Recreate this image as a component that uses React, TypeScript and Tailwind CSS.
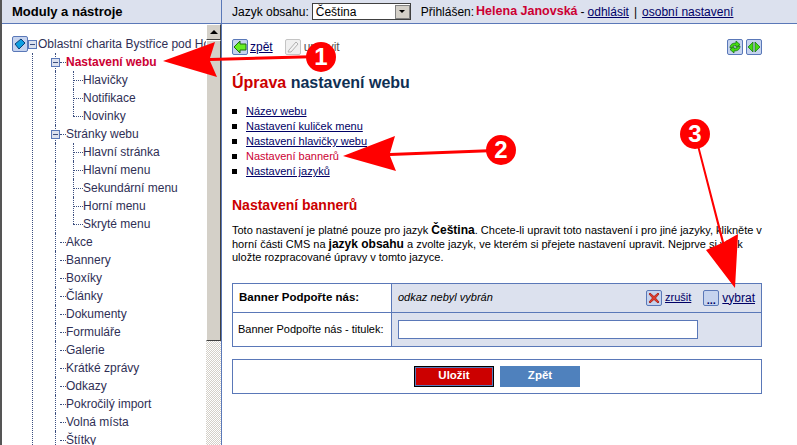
const treeTop = [
  { label: "Hlavičky" },
  { label: "Notifikace" },
  { label: "Novinky" },
]
const treePages = ["Hlavní stránka", "Hlavní menu", "Sekundární menu", "Horní menu", "Skryté menu"]
const treeRest = ["Akce", "Bannery", "Boxíky", "Články", "Dokumenty", "Formuláře", "Galerie", "Krátké zprávy", "Odkazy", "Pokročilý import", "Volná místa", "Štítky"]
const links = ["Název webu", "Nastavení kuliček menu", "Nastavení hlavičky webu", "Nastavení bannerů", "Nastavení jazyků"]

function Minus() {
  return (
    <span className="relative z-10 flex h-[9px] w-[9px] shrink-0 items-center justify-center border border-[#5a78b8] bg-[#dce1ee]">
      <span className="h-px w-[5px] bg-[#3c4f80]" />
    </span>
  )
}

function Level1({ label, open, active, last }: { label: string; open?: boolean; active?: boolean; last?: boolean }) {
  return (
    <div className="relative flex h-[18px] items-center pl-[49px]">
      <span className={`absolute left-[53px] top-0 border-l border-dotted border-[#3c4f80] ${last ? "h-[9px]" : "h-[18px]"}`} />
      {open ? <Minus /> : <span className="w-[9px] shrink-0" />}
      <span className="h-0 w-[6px] border-t border-dotted border-[#3c4f80]" />
      <span className={`whitespace-nowrap ${active ? "font-bold text-[#cc0033]" : "text-[#2f2f55]"}`}>{label}</span>
    </div>
  )
}

function Level2({ label, last }: { label: string; last?: boolean }) {
  return (
    <div className="relative flex h-[18px] items-center pl-[71px]">
      <span className="absolute left-[53px] top-0 h-[18px] border-l border-dotted border-[#3c4f80]" />
      <span className={`absolute left-[71px] top-0 border-l border-dotted border-[#3c4f80] ${last ? "h-[9px]" : "h-[18px]"}`} />
      <span className="h-0 w-[10px] border-t border-dotted border-[#3c4f80]" />
      <span className="whitespace-nowrap text-[#2f2f55]">{label}</span>
    </div>
  )
}

function IconBox({ children, plain }: { children: React.ReactNode; plain?: boolean }) {
  return (
    <span className={`flex h-[16px] w-[16px] shrink-0 items-center justify-center rounded-[2px] border ${plain ? "border-[#c4c4c4] bg-[#f0f0f0]" : "border-[#5a78b8] bg-[#c5d3ee]"}`}>
      <svg width="14" height="14" viewBox="0 0 14 14">{children}</svg>
    </span>
  )
}

function Overlay() {
  return (
    <svg className="pointer-events-none absolute left-0 top-0 z-20" width="797" height="445" viewBox="0 0 797 445">
      <g fill="#ff0000">
        <polygon points="163,61 215,42 210,58 320,55 320,58 210,61 217,77" />
        <polygon points="343,156 395,136 390,153 495,149 495,152 390,156 396,171" />
        <polygon points="735,288 706,250 722,243 694,134 696,134 724,242 738,234" />
      </g>
      <circle cx="321" cy="57" r="15" fill="#ff0000" />
      <circle cx="501" cy="150" r="15" fill="#ff0000" />
      <circle cx="695" cy="134" r="15" fill="#ff0000" />
    </svg>
  )
}

function Badge({ n, cls }: { n: number; cls: string }) {
  return (
    <span className={`pointer-events-none absolute z-30 flex h-[30px] w-[30px] items-center justify-center text-[24px] font-bold text-white ${cls}`}>
      {n}
    </span>
  )
}

export default function App() {
  return (
    <div className="relative flex h-[445px] w-[797px] overflow-hidden bg-white font-['Liberation_Sans',Arial,sans-serif] text-[12px] text-black">
      {/* Left panel */}
      <div className="flex h-full w-[222px] shrink-0 flex-col border-l-2 border-[#555]">
        <div className="flex h-[24px] shrink-0 items-center border-b border-r border-[#5a78b8] bg-[#dce1ee] pl-[10px] text-[13px] font-bold">
          Moduly a nástroje
        </div>
        <div className="flex min-h-0 flex-1 border-r border-[#5a78b8]">
          <div className="min-w-0 flex-1 overflow-hidden pt-[11px] text-[12px]">
            <div className="relative flex h-[18px] items-center pl-[10px] whitespace-nowrap">
              <span className="flex h-[16px] w-[16px] shrink-0 items-center justify-center rounded-[2px] border border-[#5a78b8] bg-[#c5d3ee]">
                <svg width="12" height="12" viewBox="0 0 12 12">
                  <polygon points="1,6 7,1 11,5 5,11" fill="#0f9fe0" stroke="#0b3f78" strokeWidth="1" />
                </svg>
              </span>
              <Minus />
              <span className="ml-px text-[#2f2f55]">Oblastní charita Bystřice pod Hostýnem</span>
            </div>
            <div className="relative">
              <span className="absolute left-[30px] top-0 h-full border-l border-dotted border-[#3c4f80]" />
              <Level1 label="Nastavení webu" open active />
              {treeTop.map((item, i) => (
                <Level2 key={item.label} label={item.label} last={i === treeTop.length - 1} />
              ))}
              <Level1 label="Stránky webu" open />
              {treePages.map((label, i) => (
                <Level2 key={label} label={label} last={i === treePages.length - 1} />
              ))}
              {treeRest.map((label) => (
                <Level1 key={label} label={label} />
              ))}
            </div>
          </div>
          {/* Scrollbar */}
          <div className="flex w-[15px] shrink-0 flex-col bg-[repeating-conic-gradient(#d4d0c8_0_25%,#ffffff_0_50%)] bg-[length:2px_2px]">
            <div className="flex h-[16px] shrink-0 items-center justify-center border border-b-[#404040] border-l-white border-r-[#404040] border-t-white bg-[#d4d0c8]">
              <span className="h-0 w-0 border-x-[4px] border-b-[4px] border-x-transparent border-b-black" />
            </div>
            <div className="h-[301px] shrink-0 border border-b-[#404040] border-l-white border-r-[#404040] border-t-white bg-[#d4d0c8]" />
          </div>
        </div>
      </div>

      {/* Right side */}
      <div className="flex min-w-0 flex-1 flex-col">
        <div className="flex h-[24px] shrink-0 items-center border-b border-[#5a78b8] bg-[#dce1ee] pl-[10px] whitespace-nowrap">
          <span>Jazyk obsahu:</span>
          <span className="ml-[3px] flex h-[17px] w-[99px] items-center border border-[#404040] bg-white pl-[3px]">
            <span className="flex-1">Čeština</span>
            <span className="flex h-[14px] w-[15px] items-center justify-center border border-[#808080] bg-[#d4d0c8]">
              <span className="h-0 w-0 border-x-[3px] border-t-[3px] border-x-transparent border-t-black" />
            </span>
          </span>
          <span className="ml-[10px]">Přihlášen:</span>
          <span className="ml-[2px] text-[12.5px] font-bold text-[#cc0033]">Helena Janovská</span>
          <span className="mx-[3px]">-</span>
          <a className="text-[#000066] underline">odhlásit</a>
          <span className="mx-[5px]">|</span>
          <a className="text-[#000066] underline">osobní nastavení</a>
        </div>

        <div className="flex flex-1 flex-col pl-[10px] pr-[35px]">
          <div className="mt-[15px] flex h-[16px] items-center">
            <IconBox>
              <polygon points="1,7 7,1 7,4 13,4 13,10 7,10 7,13" fill="#66ee22" stroke="#1c6a10" strokeWidth="1" />
            </IconBox>
            <a className="ml-[2px] text-[#000066] underline">zpět</a>
            <span className="ml-[12px]">
              <IconBox plain>
                <polygon points="3,10 10,2 12,4 5,12 2,12" fill="#f4f4f4" stroke="#b0b0b0" strokeWidth="1" />
              </IconBox>
            </span>
            <span className="ml-[3px] text-[#555]">upravit</span>
            <span className="ml-auto flex gap-[3px]">
              <IconBox>
                <path d="M2,8 C2,4 5,3 8,3 L8,1 L12,4.5 L8,7.5 L8,5.5 C6,5.5 4,6 4,8 Z" fill="#44dd11" stroke="#126610" strokeWidth="0.7" />
                <path d="M12,6 C12,10 9,11 6,11 L6,13 L2,9.5 L6,6.5 L6,8.5 C8,8.5 10,8 10,6 Z" fill="#44dd11" stroke="#126610" strokeWidth="0.7" />
              </IconBox>
              <IconBox>
                <polygon points="1,7 6,2 6,12" fill="#44dd11" stroke="#126610" strokeWidth="0.7" />
                <polygon points="13,7 8,2 8,12" fill="#44dd11" stroke="#126610" strokeWidth="0.7" />
              </IconBox>
            </span>
          </div>

          <h1 className="mt-[18px] text-[16px] font-bold leading-[20px] text-[#0f3054]">
            <span className="text-[#cc0000]">Úprava</span> nastavení webu
          </h1>

          <ul className="mt-[11px] flex flex-col">
            {links.map((label, i) => (
              <li key={label} className="flex h-[15px] items-center">
                <span className="h-[5px] w-[5px] bg-black" />
                <a className={`ml-[9px] text-[11px] ${i === 3 ? "text-[#cc0033]" : "text-[#000066] underline"}`}>{label}</a>
              </li>
            ))}
          </ul>

          <h2 className="mt-[17px] text-[14px] font-bold leading-[18px] text-[#cc0000]">Nastavení bannerů</h2>

          <p className="mt-[10px] w-[532px] whitespace-nowrap text-[11px] leading-[13.5px]">
            Toto nastavení je platné pouze pro jazyk <b className="text-[12px]">Čeština</b>. Chcete-li upravit toto nastavení i pro jiné jazyky, klikněte v<br />
            horní části CMS na <b className="text-[12px]">jazyk obsahu</b> a zvolte jazyk, ve kterém si přejete nastavení upravit. Nejprve si však<br />
            uložte rozpracované úpravy v tomto jazyce.
          </p>

          <div className="mt-[18px] w-[530px] border border-[#5a78b8]">
            <div className="flex h-[29px] border-b border-[#5a78b8]">
              <div className="flex w-[159px] shrink-0 items-center border-r border-[#5a78b8] pl-[6px] text-[11.5px] font-bold">Banner Podpořte nás:</div>
              <div className="flex flex-1 items-center bg-[#dce1ee] pl-[6px] pr-[6px]">
                <i className="flex-1 text-[11px]">odkaz nebyl vybrán</i>
                <IconBox>
                  <path d="M2,3 L3,2 L7,5.5 L11,2 L12,3 L8.5,7 L12,11 L11,12 L7,8.5 L3,12 L2,11 L5.5,7 Z" fill="#e63a2a" stroke="#a01a10" strokeWidth="0.8" />
                </IconBox>
                <a className="ml-[3px] text-[11px] text-[#000066] underline">zrušit</a>
                <span className="ml-[12px]">
                  <span className="flex h-[16px] w-[16px] items-end justify-center rounded-[2px] border border-[#5a78b8] bg-[#c5d3ee] text-[11px] font-bold leading-[10px] text-[#000066]">...</span>
                </span>
                <a className="ml-[3px] text-[#000066] underline">vybrat</a>
              </div>
            </div>
            <div className="flex h-[33px]">
              <div className="flex w-[159px] shrink-0 items-center whitespace-nowrap border-r border-[#5a78b8] pl-[5px] text-[11px]">Banner Podpořte nás - titulek:</div>
              <div className="flex flex-1 items-center bg-[#dce1ee] pl-[6px]">
                <span className="h-[19px] w-[300px] border border-[#5a78b8] bg-white" />
              </div>
            </div>
          </div>

          <div className="mt-[12px] flex h-[35px] w-[530px] items-center justify-center gap-[6px] border border-[#5a78b8]">
            <span className="flex h-[21px] w-[80px] items-center justify-center border-2 border-black bg-[#cc0000] text-[11.5px] font-bold text-white outline outline-1 -outline-offset-2 outline-[#5a78b8]">Uložit</span>
            <span className="flex h-[21px] w-[80px] items-center justify-center bg-[#4f81bd] text-[11.5px] font-bold text-white">Zpět</span>
          </div>
        </div>
      </div>

      <Overlay />
      <Badge n={1} cls="left-[306px] top-[42px]" />
      <Badge n={2} cls="left-[486px] top-[135px]" />
      <Badge n={3} cls="left-[680px] top-[119px]" />
    </div>
  )
}
